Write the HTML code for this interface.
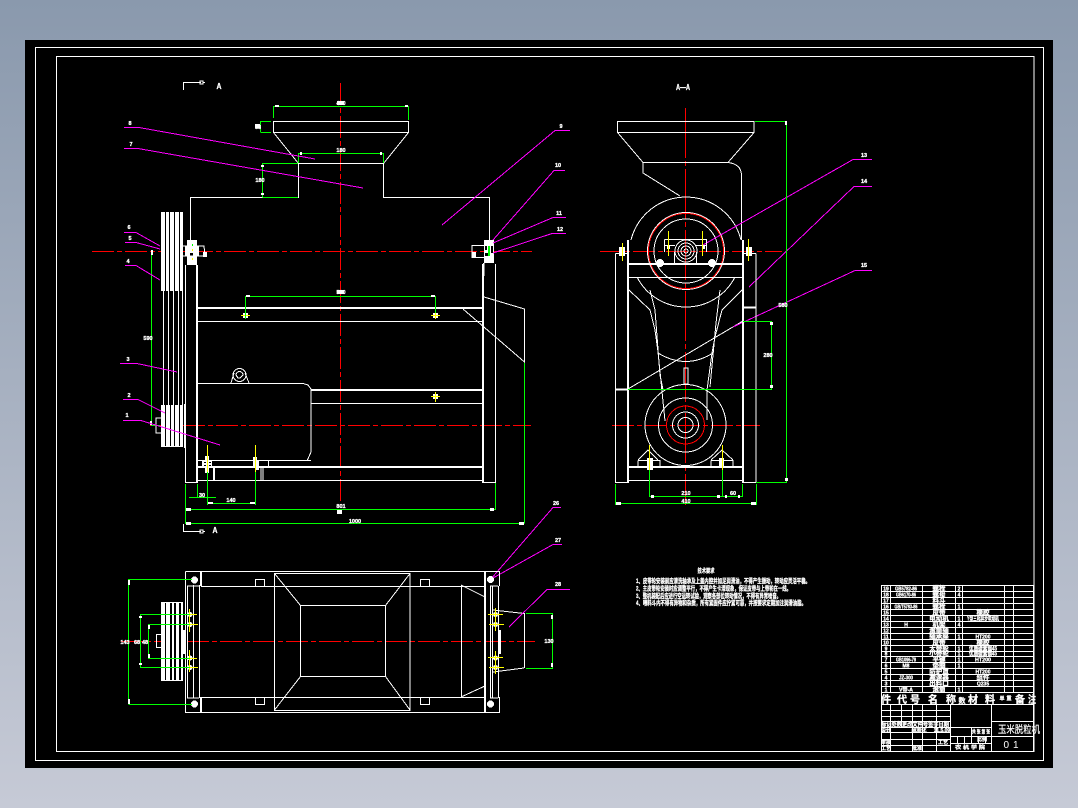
<!DOCTYPE html>
<html lang="zh">
<head>
<meta charset="utf-8">
<title>玉米脱粒机</title>
<style>
html,body{margin:0;padding:0;width:1078px;height:808px;overflow:hidden;background:#8b9aae}
body{background:linear-gradient(180deg,#8a99ad 0%,#c6cad6 100%)}
svg{position:absolute;left:0;top:0;display:block}
text{font-family:"Liberation Sans","Noto Sans CJK SC",sans-serif;fill:#fff;font-weight:700;stroke:#fff;stroke-width:.3}
.w{stroke:#fff;fill:none;stroke-width:1}
.t{stroke:#fff;fill:none;stroke-width:2}
.g{stroke:#0f0;fill:none;stroke-width:1}
.m{stroke:#f0f;fill:none;stroke-width:1}
.r{stroke:#f00;fill:none;stroke-width:1}
.c{stroke:#f00;fill:none;stroke-width:1;stroke-dasharray:22 3 5 3}
.y{stroke:#ff0;fill:none;stroke-width:1}
.f{fill:#fff;stroke:none}
.n{font-size:5.500px;text-anchor:middle}
.h{font-size:6px}
.s{font-size:5px;text-anchor:middle}
.b{font-size:6.500px;text-anchor:middle}
.k{font-size:10px;text-anchor:middle}
</style>
</head>
<body>
<svg width="1078" height="808" viewBox="0 0 1078 808" xmlns="http://www.w3.org/2000/svg" shape-rendering="crispEdges">
<rect x="25" y="40" width="1028" height="728" fill="#000"/>
<rect x="35.5" y="47.5" width="1008" height="713" class="w"/>
<rect x="56.5" y="56.5" width="977.5" height="695" class="w"/>

<!-- ===== section marks ===== -->
<path class="w" d="M183.5 90V82.500H201"/><rect x="200" y="81" width="3" height="3" class="w"/><path class="w" d="M203 82.500h2"/>
<text x="219" y="89" text-anchor="middle" style="font-size:8px" textLength="5" lengthAdjust="spacingAndGlyphs">A</text>
<path class="w" d="M183.500 524V531.500H201"/><rect x="200" y="530" width="3" height="3" class="w"/><path class="w" d="M203 531.500h2"/>
<text x="215" y="533" text-anchor="middle" style="font-size:8px" textLength="5" lengthAdjust="spacingAndGlyphs">A</text>
<text x="683" y="90" text-anchor="middle" style="font-size:8px" textLength="14" lengthAdjust="spacingAndGlyphs">A—A</text>

<!-- ===== FRONT VIEW ===== -->
<path class="c" d="M340.500 83V505"/>
<path class="c" d="M92 251.500H532"/>
<path class="c" d="M150 425.500H531"/>
<!-- hopper -->
<path class="w" d="M273.500 121.500H408.500V132.500H273.500Z"/>
<path class="w" d="M273.500 132.500L298.500 163.500M408.500 132.500L383.500 163.500"/>
<path class="w" d="M298.500 163.500H383.500M298.500 163.500V197.500H190.500V240M383.500 163.500V197.500H489.500V240"/>
<!-- pulley -->
<rect x="161" y="212" width="22" height="79" class="f"/>
<rect x="165" y="212" width="1" height="79" fill="#000"/><rect x="169" y="212" width="1" height="79" fill="#000"/><rect x="174" y="212" width="1" height="79" fill="#000"/><rect x="179" y="212" width="1" height="79" fill="#000"/>
<path class="w" d="M163.500 291V405M168.500 291V405M173.500 291V405M178.500 291V405M182.500 291V405"/>
<rect x="161" y="405" width="22" height="42" class="f"/>
<rect x="165" y="405" width="1" height="41" fill="#000"/><rect x="170" y="405" width="1" height="41" fill="#000"/><rect x="174" y="405" width="1" height="41" fill="#000"/><rect x="179" y="405" width="1" height="41" fill="#000"/>
<rect x="156" y="418" width="6" height="15" class="w"/>
<path class="w" d="M184.500 404V448"/>
<!-- posts -->
<path class="w" d="M185.500 265V482.500H196.500"/>
<path class="t" d="M197 265V483"/>
<path class="w" d="M483.500 263V482.500H495.500V264"/>
<path class="t" d="M483 264V483"/>
<!-- rails -->
<path class="t" d="M197 308H483M197 467H483M311 390H483"/>
<path class="w" d="M197 321.500H483M311 403.500H483M197 480.500H483"/>
<!-- motor -->
<path class="w" d="M198 383.500H303L308 385L311 389V452L307 461"/>
<path class="w" d="M198 460.500H311M268.500 461V467M214.500 468V480M261 468V480M263 468V480"/>
<rect x="213" y="468" width="2" height="12" class="f"/>
<circle cx="239.500" cy="375" r="6.500" class="w"/><path class="w" d="M236 375a3.500 3.500 0 1 1 7 0l-3 3h-2Z"/>
<path class="w" d="M231 383L234 373M249 383L245 373"/>
<!-- taper on right -->
<path class="w" d="M484 297L524.500 309V362L463 309"/>
<!-- left bolt cluster -->
<path class="f" d="M187 240H197V246H199V256H197V265H187V256H185V246H187Z"/>
<rect x="190" y="253" width="3" height="3" style="fill:#000"/>
<path class="w" d="M183 246H204L205 256H183"/>
<rect x="203" y="252" width="4" height="5" class="f"/>
<rect x="192" y="244" width="1" height="2" fill="#0f0"/><rect x="192" y="258" width="1" height="2" fill="#ff0"/><rect x="192" y="249" width="1" height="2" fill="#ff0"/>
<!-- right bolt cluster -->
<path class="f" d="M484 240H494V263H484Z"/>
<rect x="488" y="246" width="2" height="10" fill="#0f0"/>
<rect x="485" y="246" width="2" height="4" fill="#000"/><rect x="491" y="246" width="2" height="7" fill="#000"/><rect x="485" y="253" width="3" height="3" fill="#000"/>
<path class="w" d="M484 245.500H472V257.500H484"/><rect x="472" y="252" width="4" height="5" class="f"/>
<path class="w" d="M484 263V276"/>
<!-- motor bolts -->
<path class="f" d="M205 456h4v4h3v8h-3v5h-4v-5h-3v-8h3z"/>
<path class="f" d="M253 457h4v3h2v6h2v1h-2v3h-4v-3h-5v-1h3v-6h0z"/>
<path class="y" d="M207.500 445V472M255.500 445V472"/>
<path class="g" d="M207.500 472V505M255.500 472V505"/>
<rect x="204" y="462" width="2" height="1" fill="#000"/><rect x="204" y="465" width="2" height="1" fill="#000"/><rect x="209" y="462" width="2" height="1" fill="#000"/><rect x="209" y="465" width="2" height="1" fill="#000"/>
<!-- rail bolts -->
<g fill="#fff">
<rect x="243" y="313" width="5" height="5"/><rect x="433" y="313" width="5" height="5"/><rect x="433" y="394" width="5" height="5"/>
</g>
<path class="y" d="M241 315.500H250M431 315.500H440M431 396.500H440M435.500 392V402M245.500 312V319M435.500 312V319"/>

<!-- front dims -->
<path class="g" d="M273.500 106.500H408.500M273.500 106V118M408.500 106V120"/>
<path class="g" d="M260.500 121.500H271M260.500 132.500H271M260.500 121V132"/>
<path class="g" d="M298.500 153.500H383.500M298.500 153V163M383.500 153V163"/>
<path class="g" d="M262.500 163.500H298M262.500 197.500H298M262.500 163V197"/>
<path class="g" d="M245.500 296.500H435.500M245.500 296V319M435.500 296V313"/>
<path class="g" d="M151.500 251V425.500H160"/>
<path class="g" d="M189 497.500H216M197.500 484V497"/>
<path class="g" d="M207.500 503.500H255.500"/>
<path class="g" d="M185.500 484V524M185.500 509.500H495.500M185.500 523.500H524.500M495.500 483V510M524.500 363V523"/>
<g class="f">
<rect x="337" y="101" width="7" height="4"/><rect x="337" y="290" width="7" height="4"/><rect x="337" y="510" width="5" height="4"/><rect x="255" y="124" width="5" height="4"/>
<rect x="275" y="105" width="4" height="2"/><rect x="405" y="105" width="3" height="2"/><rect x="300" y="152" width="2" height="3"/><rect x="380" y="152" width="2" height="3"/>
<rect x="261" y="165" width="3" height="2"/><rect x="261" y="193" width="3" height="2"/><rect x="246" y="295" width="4" height="2"/><rect x="431" y="295" width="4" height="2"/>
<rect x="186" y="508" width="5" height="3"/><rect x="186" y="522" width="5" height="3"/><rect x="490" y="508" width="4" height="3"/><rect x="519" y="522" width="5" height="3"/>
<rect x="208" y="502" width="5" height="2"/><rect x="250" y="502" width="5" height="2"/><rect x="150" y="421" width="2" height="4"/><rect x="151" y="250" width="2" height="5"/>
</g>
<g class="n">
<text x="341" y="105">400</text><text x="341" y="152">180</text><text x="260" y="182">180</text>
<text x="258" y="129">88</text><text x="341" y="294">500</text>
<text x="148" y="340">590</text><text x="202" y="497">30</text><text x="231" y="502">140</text>
<text x="341" y="508">801</text><text x="355" y="523">1000</text>
</g>

<!-- leaders front -->
<path class="m" d="M124 127.500H139L315 159"/>
<path class="m" d="M124 148.500H138L363 188"/>
<path class="m" d="M124 232.500H136L160 246"/>
<path class="m" d="M125 242.500H136L160 249"/>
<path class="m" d="M125 265.500H136L160 280"/>
<path class="m" d="M120 363.500H137L177 372"/>
<path class="m" d="M123 399.500H138L165 413"/>
<path class="m" d="M123 420.500H141L220 445"/>
<path class="m" d="M442 225L555 130.500H570"/>
<path class="m" d="M493 240L554 170.500H565"/>
<path class="m" d="M493 243L553 217.500H566"/>
<path class="m" d="M493 253L552 233.500H566"/>
<g class="n">
<text x="130" y="125">8</text><text x="131" y="146">7</text><text x="129" y="229">6</text><text x="130" y="240">5</text><text x="128" y="263">4</text>
<text x="128" y="361">3</text><text x="129" y="397">2</text><text x="127" y="417">1</text>
<text x="561" y="128">9</text><text x="558" y="167">10</text><text x="559" y="215">11</text><text x="560" y="231">12</text>
</g>

<!-- ===== SIDE VIEW ===== -->
<path class="c" d="M685.500 108V505" style="stroke-dasharray:50 3 5 3"/>
<path class="c" d="M600 251.500H782" />
<path class="c" d="M612 425.500H760"/>
<path class="w" d="M617.500 121.500H754V132.500H617.500Z"/>
<path class="w" d="M617.500 132.500L643 162.500M754 132.500L728 162.500"/>
<path class="w" d="M643 162.500H728Q741 164 741.500 175V240M643 162.500V173L680 196"/>
<path class="w" d="M631 240A56.700 56.700 0 0 1 741 240"/>
<circle cx="686" cy="251" r="38.500" class="w"/>
<circle cx="686" cy="251" r="37.500" class="r"/>
<circle cx="686" cy="251" r="32" class="w"/>
<circle cx="686" cy="251" r="11" class="w"/>
<circle cx="686" cy="251" r="8" class="w"/>
<circle cx="686" cy="251" r="5" class="w"/>
<circle cx="686" cy="251" r="2" class="w"/>
<path class="w" d="M629 290L650 310L655 330L658 352L665 421"/>
<path class="w" d="M742 290L722 310L715 337L712 353L707 390V420"/>
<path class="w" d="M650 290L655 310L660 375L663 390"/>
<path class="w" d="M720 290L716 323L710 387"/>
<path class="w" d="M637 277A55 55 0 0 0 735 277"/>
<path class="w" d="M658 353Q686 370 713 353"/>
<circle cx="685.500" cy="425" r="40.500" class="w"/>
<circle cx="685.500" cy="425" r="27" class="w"/>
<circle cx="685.500" cy="425" r="19" class="r"/>
<circle cx="685.500" cy="425" r="13" class="w"/>
<circle cx="685.500" cy="425" r="7.500" class="w"/>
<path class="w" d="M638 460L648 450L658 460M711 460L722 450L733 460"/>
<path class="w" d="M743 321L628 389"/>
<path class="m" d="M853 159.500H872M853 159.500L703 245"/>
<path class="m" d="M854 186.500H872M854 186.500L749 287"/>
<path class="m" d="M855 270.500H872M855 270.500L733 327"/>
<path class="w" d="M664.500 239.500H706.500V252M664.500 239.500V252M674.500 252V263M696.500 252V263"/>
<path class="w" d="M664.500 245.500H675M696 245.500H706.500"/>
<path class="t" d="M628 264H743"/>
<path class="w" d="M628 277.500H743"/>
<path class="w" d="M615.500 253.500V482.500H628M756 253.500V482.500H743M615.500 253.500H628M743 253.500H756"/>
<path class="t" d="M628 240V483M743 240V483"/>
<path class="t" d="M744 307.500H756M616 389.500H628M628 467H743"/>
<path class="w" d="M628 480.500H743"/>
<rect x="684" y="368" width="4" height="16" class="w"/>
<path class="w" d="M638 460.500H660V467M638 460.500V467M711 460.500H733V467M711 460.500V467"/>
<!-- side bolts -->
<g class="f">
<rect x="619" y="247" width="6" height="9"/><rect x="746" y="247" width="6" height="9"/>
<circle cx="660" cy="263" r="4"/><circle cx="712" cy="263" r="4"/>
<rect x="647" y="458" width="6" height="12"/><rect x="719" y="458" width="5" height="10"/>
<rect x="667" y="245" width="3" height="4"/><rect x="702" y="245" width="3" height="4"/>
</g>
<path class="y" d="M622.500 243V261M748.500 239V261M668.500 231V256M702.500 231V256M649.500 445V470M722.500 445V470"/>
<!-- side dims -->
<path class="g" d="M755 121.500H787M786.500 121V483M756 482.500H787"/>
<path class="g" d="M743 321.500H772M628 389.500H772M771.500 321V389"/>
<path class="g" d="M649.500 470V497M722.500 470V497M742.500 484V497M649.500 496.500H742.500"/>
<path class="g" d="M615.500 484V505M756.500 484V505M615.500 503.500H756.500"/>
<g class="f">
<rect x="616" y="502" width="5" height="3"/><rect x="751" y="502" width="5" height="3"/><rect x="651" y="495" width="3" height="3"/><rect x="717" y="495" width="3" height="3"/>
<rect x="725" y="495" width="2" height="3"/><rect x="738" y="495" width="2" height="3"/><rect x="770" y="322" width="3" height="3"/><rect x="770" y="385" width="3" height="3"/><rect x="785" y="121" width="2" height="4"/><rect x="785" y="478" width="3" height="3"/>
</g>
<g class="n">
<text x="686" y="495">210</text><text x="686" y="503">410</text><text x="733" y="495">60</text><text x="768" y="357">280</text><text x="783" y="307">580</text>
<text x="864" y="157">13</text><text x="864" y="183">14</text><text x="864" y="267">15</text>
</g>

<!-- ===== TOP VIEW ===== -->
<path class="c" d="M121 641.500H535"/>
<path class="w" d="M274.500 573.500L300.500 605.500M410 573.500L385.500 605.500M274.500 710L300.500 676.500M410 710L385.500 676.500"/>
<path class="w" d="M461 585L485 597M461 697L485 686"/>
<path class="w" d="M493 610L524 613.500M493 672L524 668"/>
<path class="m" d="M490 580L553 507.500H561"/>
<path class="m" d="M493 578L553 544.500H562"/>
<path class="m" d="M509 627L547 589.500H570"/>
<path class="w" d="M185.500 571.500H499.500V586M185.500 571.500V712.500H499.500V697"/>
<path class="w" d="M201 586.500H485M201 697.500H485"/>
<path class="t" d="M201 572V586M201 697V712M485 572V712"/>
<rect x="274.500" y="573.500" width="135.500" height="137" class="w"/>
<rect x="300.500" y="605.500" width="85" height="71" class="w"/>
<rect x="255.500" y="579.500" width="9" height="7" class="w"/><rect x="255.500" y="697.500" width="9" height="7" class="w"/>
<rect x="420.500" y="579.500" width="9" height="7" class="w"/><rect x="420.500" y="697.500" width="9" height="7" class="w"/>
<path class="w" d="M461.500 585V697"/>
<path class="w" d="M187.500 586V698M193.500 585V698M199.500 585V698M187 586H199M187 698H199"/>
<path class="w" d="M490.500 586V698M492.500 586V698M498.500 586V698M490 586H498M490 698H498"/>
<path class="w" d="M524.500 613V668"/>
<path class="t" d="M184 630V654M500 630V654"/>
<!-- top pulley -->
<rect x="161" y="602" width="22" height="79" class="f"/>
<rect x="165" y="603" width="1" height="77" fill="#000"/><rect x="170" y="603" width="2" height="77" fill="#000"/><rect x="174" y="603" width="2" height="77" fill="#000"/><rect x="179" y="603" width="2" height="77" fill="#000"/>
<rect x="156.500" y="634.500" width="5" height="13" class="w"/>
<g class="f">
<circle cx="194.500" cy="580" r="3.500"/><circle cx="194.500" cy="704" r="3.500"/><circle cx="490.500" cy="579.500" r="3.500"/><circle cx="490.500" cy="704" r="3.500"/>
<circle cx="190" cy="614.500" r="2.500"/><circle cx="190" cy="624.500" r="2.500"/><circle cx="190" cy="658" r="2.500"/><circle cx="190" cy="667.500" r="2.500"/>
<circle cx="495.500" cy="614.500" r="2.500"/><circle cx="495.500" cy="624.500" r="2.500"/><circle cx="495.500" cy="658" r="2.500"/><circle cx="495.500" cy="667.500" r="2.500"/>
</g>
<path class="y" d="M186 614.500H197M186 624.500H198M186 658.500H197M186 667.500H198M189.500 609V632M189.500 650V672"/>
<path class="y" d="M488 614.500H503M489 624.500H504M488 657.500H503M489 667.500H504M495.500 608V631M495.500 651V674"/>
<path class="g" d="M128.500 579.500H192M128.500 704.500H192M128.500 579V704"/>
<path class="g" d="M140 614.500H190M140 667.500H190M140.500 614V667"/>
<path class="g" d="M148 624.500H190M148 658.500H190M148.500 624V658"/>
<path class="g" d="M526 613.500H553M526 668.500H553M552.500 613V668"/>
<g class="f">
<rect x="128" y="580" width="2" height="5"/><rect x="128" y="699" width="2" height="5"/><rect x="139" y="616" width="3" height="2"/><rect x="139" y="663" width="3" height="2"/><rect x="148" y="625" width="2" height="4"/><rect x="148" y="654" width="2" height="4"/><rect x="551" y="615" width="2" height="4"/><rect x="551" y="663" width="2" height="4"/>
</g>
<g class="n">
<text x="125" y="644">143</text><text x="137" y="644">68</text><text x="145" y="644">48</text><text x="549" y="643">130</text>
<text x="556" y="505">26</text><text x="558" y="542">27</text><text x="558" y="586">28</text>
</g>

<!-- ===== TECH NOTES ===== -->
<text x="706" y="573" text-anchor="middle" style="font-size:6px" textLength="17" lengthAdjust="spacingAndGlyphs">技术要求</text>
<text x="636" y="583" style="font-size:6.500px" textLength="174" lengthAdjust="spacingAndGlyphs">1、皮带轮安装前应清洗轴承及上盖内腔并加足润滑油，不得产生振动，转动应灵活平稳。</text>
<text x="636" y="590.500" style="font-size:6.500px" textLength="155" lengthAdjust="spacingAndGlyphs">2、主皮带轮安装时应调整平行，不得产生卡滞现象，保证皮带与上带轮在一线。</text>
<text x="636" y="598" style="font-size:6.500px" textLength="145" lengthAdjust="spacingAndGlyphs">3、整机装配后应进行空运转试验，观察各部位转动情况，不得有异常噪音。</text>
<text x="636" y="605" style="font-size:6.500px" textLength="170" lengthAdjust="spacingAndGlyphs">4、喂料斗内不得有异物和杂质，所有紧固件应拧紧可靠，并按要求定期加注润滑油脂。</text>

<!-- ===== TITLE BLOCK ===== -->
<rect x="881.500" y="585.500" width="152" height="166" class="w"/>
<path class="w" d="M881 591.500H1033M881 597.500H1033M881 603.500H1033M881 609.500H1033M881 615.500H1033M881 621.500H1033M881 627.500H1033M881 633.500H1033M881 639.500H1033M881 645.500H1033M881 651.500H1033M881 656.500H1033M881 662.500H1033M881 668.500H1033M881 674.500H1033M881 680.500H1033M881 686.500H1033M881 692.500H1033"/>
<path class="w" d="M890.500 585V692M922.500 585V692M955.500 585V692M962.500 585V692M1004.500 585V692M1013.500 585V692"/>
<path class="w" d="M881 704.500H1033"/>
<path class="w" d="M881 710.500H950M881 716.500H950M881 721.500H950M881 727.500H950M881 732.500H950M881 739.500H950M881 745.500H950"/>
<path class="w" d="M890.500 704V751M901.500 704V727M912.500 704V751M922.500 704V751M936.500 704V751M950.500 704V751"/>
<path class="w" d="M991.500 704V751M992 721.500H1033M992 736.500H1033M950 727.500H992M950 736.500H992M950 743.500H992"/>
<path class="w" d="M971.500 727V736M957.500 736V743M964.500 736V743M971.500 736V743M978.500 736V743M985.500 736V743"/>

<text x="886" y="590.500" class="s">19</text><text x="906" y="590.500" class="s" textLength="22" lengthAdjust="spacingAndGlyphs">GB5782-86</text><text x="939" y="590.500" class="b">螺栓</text><text x="959" y="590.500" class="s">2</text>
<text x="886" y="596.500" class="s">18</text><text x="906" y="596.500" class="s" textLength="20" lengthAdjust="spacingAndGlyphs">GB6170-86</text><text x="939" y="596.500" class="b">螺母</text><text x="959" y="596.500" class="s">4</text>
<text x="886" y="602.500" class="s">17</text><text x="939" y="602.500" class="b">料斗</text>
<text x="886" y="608.500" class="s">16</text><text x="906" y="608.500" class="s" textLength="23" lengthAdjust="spacingAndGlyphs">GB/T5783-86</text><text x="939" y="608.500" class="b">螺栓</text><text x="959" y="608.500" class="s">1</text>
<text x="886" y="614.500" class="s">15</text><text x="939" y="614.500" class="b">皮带</text><text x="983" y="614.500" class="b">橡胶</text>
<text x="886" y="620.500" class="s">14</text><text x="939" y="620.500" class="b">电动机</text><text x="959" y="620.500" class="s">1</text><text x="983" y="620.500" class="b" textLength="32" lengthAdjust="spacingAndGlyphs">Y型三相异步电动机</text>
<text x="886" y="626.500" class="s">13</text><text x="906" y="626.500" class="s">H</text><text x="939" y="626.500" class="b">机架</text><text x="959" y="626.500" class="s">4</text>
<text x="886" y="632.500" class="s">12</text><text x="939" y="632.500" class="b">滚筒轴</text>
<text x="886" y="638.500" class="s">11</text><text x="939" y="638.500" class="b">轴承座</text><text x="959" y="638.500" class="s">1</text><text x="983" y="638.500" class="s">HT200</text>
<text x="886" y="644.500" class="s">10</text><text x="939" y="644.500" class="b">皮带</text><text x="983" y="644.500" class="b">橡胶</text>
<text x="886" y="650.500" class="s">9</text><text x="939" y="650.500" class="b">大带轮</text><text x="959" y="650.500" class="s">1</text><text x="983" y="650.500" class="b" textLength="28" lengthAdjust="spacingAndGlyphs">优质碳素钢45</text>
<text x="886" y="655.500" class="s">8</text><text x="939" y="655.500" class="b">小带轮</text><text x="959" y="655.500" class="s">1</text><text x="983" y="655.500" class="b" textLength="28" lengthAdjust="spacingAndGlyphs">优质碳素钢45</text>
<text x="886" y="661.500" class="s">7</text><text x="906" y="661.500" class="s" textLength="20" lengthAdjust="spacingAndGlyphs">GB1096-79</text><text x="939" y="661.500" class="b">平键</text><text x="959" y="661.500" class="s">1</text><text x="983" y="661.500" class="s" textLength="16" lengthAdjust="spacingAndGlyphs">HT200</text>
<text x="886" y="667.500" class="s">6</text><text x="906" y="667.500" class="s">M8</text><text x="939" y="667.500" class="b">垫圈</text><text x="959" y="667.500" class="s">1</text>
<text x="886" y="673.500" class="s">5</text><text x="939" y="673.500" class="b">防护罩</text><text x="983" y="673.500" class="s">HT200</text>
<text x="886" y="679.500" class="s">4</text><text x="906" y="679.500" class="s" textLength="14" lengthAdjust="spacingAndGlyphs">JZ-300</text><text x="939" y="679.500" class="b">减速器</text><text x="983" y="679.500" class="b">组件</text>
<text x="886" y="685.500" class="s">3</text><text x="939" y="685.500" class="b">出料口</text><text x="983" y="685.500" class="s">Q235</text>
<text x="886" y="691.500" class="s">1</text><text x="906" y="691.500" class="s" textLength="14" lengthAdjust="spacingAndGlyphs">V带-A</text><text x="939" y="691.500" class="b">滚筒</text><text x="959" y="691.500" class="s">1</text>

<text x="886" y="703" class="k">件</text><text x="902" y="703" class="k">代</text><text x="915" y="703" class="k">号</text>
<text x="933" y="703" class="k">名</text><text x="951" y="703" class="k">称</text><text x="962" y="703" class="k" style="font-size:7px">数</text>
<text x="973" y="703" class="k">材</text><text x="990" y="703" class="k">料</text>
<text x="1002" y="700" class="s">单</text><text x="1009" y="700" class="s">重</text>
<text x="1020" y="703" class="k">备</text><text x="1032" y="703" class="k" textLength="8" lengthAdjust="spacingAndGlyphs">注</text>

<text x="881" y="726.500" style="font-size:6px" textLength="68" lengthAdjust="spacingAndGlyphs">标记处数更改文件号签字日期</text>
<text x="886" y="732" class="s">设计</text><text x="919" y="732" class="s">标准化</text><text x="942" y="732" class="s">11.5.09</text>
<text x="886" y="744" class="s">审核</text><text x="943" y="744" class="s">工艺</text>
<text x="886" y="750" class="s">工艺</text><text x="917" y="750" class="s">批准</text>
<text x="981" y="733.500" class="s" textLength="18" lengthAdjust="spacingAndGlyphs">共 张 第 张</text>
<text x="977" y="741" style="font-size:5px">比例</text>
<text x="970" y="749" class="s" textLength="30" lengthAdjust="spacingAndGlyphs">农 机 学 院</text>
<text x="1019" y="733" text-anchor="middle" style="font-size:10px;font-weight:400;stroke-width:.2" textLength="42" lengthAdjust="spacingAndGlyphs">玉米脱粒机</text>
<text x="1013" y="748" text-anchor="middle" style="font-size:10px;font-weight:400;letter-spacing:4px;stroke-width:0">01</text>
</svg>
</body>
</html>
